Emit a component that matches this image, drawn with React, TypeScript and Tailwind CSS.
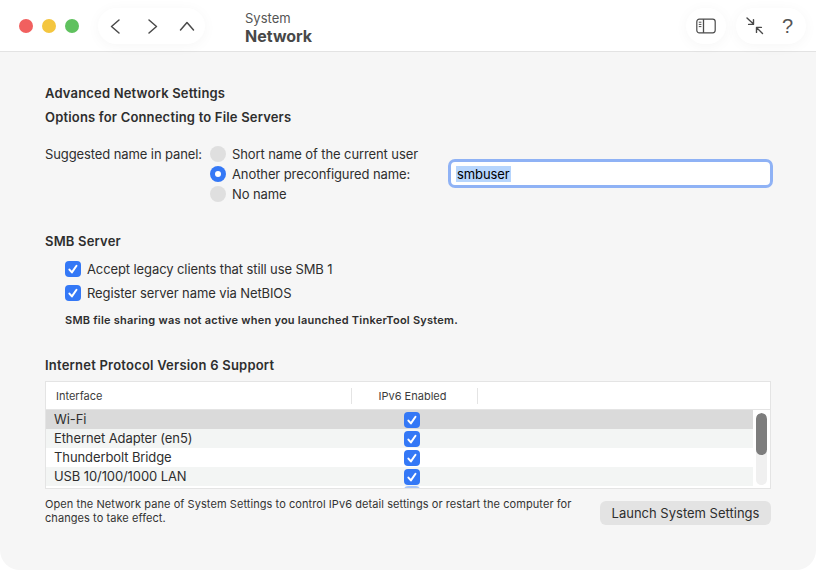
import React from "react";

const Check = () => (
  <span className="flex h-4 w-4 shrink-0 items-center justify-center rounded-[4px] bg-[#3478f6]">
    <svg width="12" height="12" viewBox="0 0 12 12" fill="none">
      <path d="M2.4 6.6 L4.9 9.4 L9.5 2.8" stroke="white" strokeWidth="2" strokeLinecap="round" strokeLinejoin="round" />
    </svg>
  </span>
);

const Radio = ({ on, label }: { on?: boolean; label: string }) => (
  <div className="flex h-5 items-center gap-[6px]">
    {on ? (
      <span className="flex h-4 w-4 items-center justify-center rounded-full bg-[#3478f6]">
        <span className="h-[6px] w-[6px] rounded-full bg-white" />
      </span>
    ) : (
      <span className="h-4 w-4 rounded-full bg-[#dfdfdf]" />
    )}
    <span>{label}</span>
  </div>
);

const rows = [
  { name: "Wi-Fi", bg: "bg-[#dadada]" },
  { name: "Ethernet Adapter (en5)", bg: "bg-[#f3f5f4]" },
  { name: "Thunderbolt Bridge", bg: "bg-white" },
  { name: "USB 10/100/1000 LAN", bg: "bg-[#f3f5f4]" },
];

export default function App() {
  return (
    <div className="h-[570px] w-[816px] overflow-hidden bg-white font-['Inter','Liberation_Sans',sans-serif] text-[13px] leading-4 tracking-[-0.1px] text-[#2e2e2e]">
      <div className="flex h-[570px] flex-col overflow-hidden rounded-b-[20px] bg-[#f6f6f6]">
        <header className="flex h-[52px] shrink-0 items-start border-b border-[#e3e3e3] bg-white">
          <div className="mt-[19px] ml-[19px] flex gap-[9px]">
            <span className="h-[14px] w-[14px] rounded-full bg-[#f1605f]" />
            <span className="h-[14px] w-[14px] rounded-full bg-[#f4c63f]" />
            <span className="h-[14px] w-[14px] rounded-full bg-[#5fc15e]" />
          </div>
          <nav className="mt-2 ml-[19px] flex h-9 w-[107px] items-center rounded-full bg-white shadow-[0_2px_14px_rgba(0,0,0,0.04)]">
            <svg width="107" height="36" viewBox="0 0 107 36" fill="none" stroke="#4a4a4a" strokeWidth="1.5" strokeLinecap="round" strokeLinejoin="round">
              <path d="M21 12 L13.5 18.5 L21 25" />
              <path d="M51 12 L58.5 18.5 L51 25" />
              <path d="M82.5 22 L89 14.5 L95.5 22" />
            </svg>
          </nav>
          <div className="mt-[10px] ml-10 flex flex-col text-[#555]">
            <span className="text-[13px] leading-4 tracking-normal">System</span>
            <span className="text-[16px] leading-5 font-bold tracking-normal text-[#484848]">Network</span>
          </div>
          <div className="mt-2 ml-auto flex gap-[10px] pr-[10px]">
            <div className="flex h-9 w-10 items-center justify-center rounded-full bg-white shadow-[0_2px_14px_rgba(0,0,0,0.04)]">
              <svg width="20" height="16" viewBox="0 0 20 16" fill="none" stroke="#4a4a4a" strokeWidth="1.2">
                <rect x="0.8" y="1.2" width="18.4" height="13.6" rx="2.5" />
                <path d="M7.5 1.2 V14.8" strokeWidth="1.3" />
                <path d="M2.8 4.2 H5.4 M2.8 6.4 H5.4 M2.8 8.6 H5.4" strokeWidth="1" />
              </svg>
            </div>
            <div className="flex h-9 w-[70px] items-center gap-[18px] rounded-full bg-white pl-[10px] shadow-[0_2px_14px_rgba(0,0,0,0.04)]">
              <svg width="18" height="18" viewBox="0 0 18 18" fill="none" stroke="#4a4a4a" strokeWidth="1.4" strokeLinecap="round" strokeLinejoin="round">
                <path d="M1 1 L7.5 7 M7.5 2.6 V7.4 H2.6" />
                <path d="M16.5 16.5 L10.5 10.5 M10.5 15.4 V10.4 H15.4" />
              </svg>
              <span className="font-['Liberation_Sans',sans-serif] text-[20px] leading-6 text-[#555]">?</span>
            </div>
          </div>
        </header>

        <main className="flex flex-1 flex-col px-[45px] pt-[33px]">
          <h1 className="font-semibold tracking-[0.18px]">Advanced Network Settings</h1>
          <h2 className="mt-2 font-semibold tracking-[0.18px]">Options for Connecting to File Servers</h2>

          <section className="mt-5 flex items-start">
            <span className="mt-[1px] w-[165px] shrink-0">Suggested name in panel:</span>
            <div className="-mt-[1px] flex w-[238px] shrink-0 flex-col">
              <Radio label="Short name of the current user" />
              <Radio on label="Another preconfigured name:" />
              <Radio label="No name" />
            </div>
            <div className="mt-[14px] -mr-[2px] flex h-[29px] flex-1 items-center rounded-[7px] border-[3px] border-[#8fb2f5] bg-white pl-[5px] text-black">
              <span className="bg-[#b6d5fd] px-px">smbuser</span>
            </div>
          </section>

          <h2 className="mt-[29px] font-semibold tracking-[0.18px]">SMB Server</h2>
          <div className="mt-3 flex flex-col gap-2 pl-5">
            <label className="flex items-center gap-[6px]"><Check />Accept legacy clients that still use SMB 1</label>
            <label className="flex items-center gap-[6px]"><Check />Register server name via NetBIOS</label>
            <p className="mt-[3px] text-[11px] leading-4 font-semibold tracking-[0.23px]">SMB file sharing was not active when you launched TinkerTool System.</p>
          </div>

          <h2 className="mt-[29px] font-semibold tracking-[0.22px]">Internet Protocol Version 6 Support</h2>
          <div className="mt-2 h-[108px] overflow-hidden border border-[#e4e4e4] bg-white">
            <div className="flex h-[28px] items-center border-b border-[#e4e4e4] text-[11px] tracking-normal text-[#3c3c3c]">
              <span className="w-[305px] pl-[10px]">Interface</span>
              <span className="flex h-4 w-[127px] items-center justify-center border-x border-[#e4e4e4] pr-1">IPv6 Enabled</span>
            </div>
            <div className="flex">
              <div className="w-[707px]">
                {rows.map((r) => (
                  <div key={r.name} className={`flex h-[19px] items-center ${r.bg}`}>
                    <span className="w-[358px] pb-px pl-[8px]">{r.name}</span>
                    <Check />
                  </div>
                ))}
                <div className="ml-[358px] h-1 w-4 rounded-t-[4px] bg-[#a9c6f8]" />
              </div>
              <div className="mt-[3px] ml-[3px] h-[72px] w-[11px] overflow-hidden rounded-full bg-[#f0f0f0]">
                <div className="h-[42px] rounded-full bg-[#7d7d7d]" />
              </div>
            </div>
          </div>

          <div className="mt-2 flex items-start justify-between">
            <p className="w-[540px] text-[11px] leading-[14px] tracking-[0.07px] text-[#333]">
              Open the Network pane of System Settings to control IPv6 detail settings or restart the computer for changes to take effect.
            </p>
            <button className="mt-1 h-6 w-[171px] rounded-[6px] bg-[#e3e3e3] text-[13px] tracking-normal text-[#2e2e2e]">Launch System Settings</button>
          </div>
        </main>
      </div>
    </div>
  );
}
